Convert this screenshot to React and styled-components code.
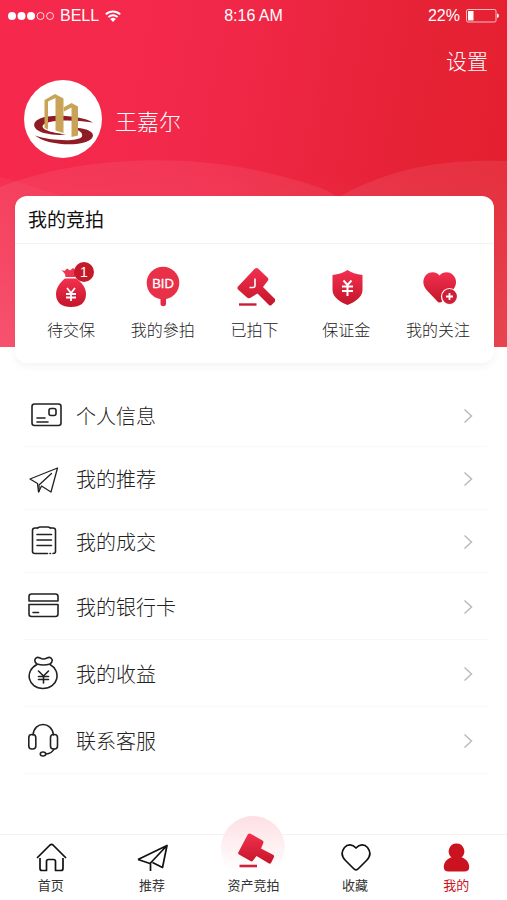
import styled, { createGlobalStyle } from 'styled-components';

const auctions = [
  { name: '待交保', icon: <BagIcon />, badge: 1 },
  { name: '我的參拍', icon: <BidIcon /> },
  { name: '已拍下', icon: <HammerIcon /> },
  { name: '保证金', icon: <ShieldIcon /> },
  { name: '我的关注', icon: <FollowIcon /> },
]

const menu = [
  { name: '个人信息', icon: <CardIcon /> },
  { name: '我的推荐', icon: <PlaneIcon /> },
  { name: '我的成交', icon: <ListIcon /> },
  { name: '我的银行卡', icon: <BankIcon />, tall: true },
  { name: '我的收益', icon: <IncomeIcon />, tall: true },
  { name: '联系客服', icon: <HeadsetIcon />, tall: true },
]

const tabs = [
  { name: '首页', icon: <HomeIcon /> },
  { name: '推荐', icon: <SendIcon /> },
  { name: '资产竞拍', icon: <AuctionIcon />, main: true },
  { name: '收藏', icon: <HeartIcon /> },
  { name: '我的', icon: <UserIcon />, active: true },
]

export default function App() {
  return (
    <Page>
      <GlobalStyle />
      <Gradients />
      <Header>
        <Waves viewBox="0 0 507 347" preserveAspectRatio="none">
          <path d="M0 177 Q30 185 62 196 V347 H0Z" fill="#fff" opacity=".04" />
          <path d="M0 187 C90 152 220 150 326 190 L350 204 V347 H0Z" fill="#fff" opacity=".07" />
          <path d="M326 204 L352 190 C400 166 450 159 507 161 V347 H326Z" fill="#fff" opacity=".08" />
        </Waves>
        <StatusBar>
          <StatusGroup>
            <SignalIcon />
            <span>BELL</span>
            <WifiIcon />
          </StatusGroup>
          <span>8:16 AM</span>
          <StatusGroup $end>
            <span>22%</span>
            <BatteryIcon />
          </StatusGroup>
        </StatusBar>
        <Settings type="button">设置</Settings>
        <Profile>
          <Avatar><LogoIcon /></Avatar>
          <h1>王嘉尔</h1>
        </Profile>
      </Header>

      <AuctionCard>
        <h2>我的竞拍</h2>
        <AuctionList>
          {auctions.map(a => (
            <AuctionButton type="button" key={a.name}>
              <IconBox>
                {a.icon}
                {a.badge && <Badge>{a.badge}</Badge>}
              </IconBox>
              {a.name}
            </AuctionButton>
          ))}
        </AuctionList>
      </AuctionCard>

      <Menu>
        {menu.map(m => (
          <MenuRow href="#" key={m.name} $tall={m.tall}>
            <MenuIcon>{m.icon}</MenuIcon>
            <span>{m.name}</span>
            <Arrow viewBox="0 0 10 16"><path d="M1.5 2.5 8.5 9l-7 6.5" /></Arrow>
          </MenuRow>
        ))}
      </Menu>

      <TabBar>
        {tabs.map(t => (
          <Tab href="#" key={t.name} $active={t.active}>
            <TabIcon $main={t.main}>{t.icon}</TabIcon>
            {t.name}
          </Tab>
        ))}
      </TabBar>
    </Page>
  );
}

function Gradients() {
  return (
    <svg width="0" height="0" style={{ position: 'absolute' }} aria-hidden="true">
      <linearGradient id="red" x1="0" y1="0" x2="0" y2="1">
        <stop offset="0" stopColor="#f2304f" />
        <stop offset="1" stopColor="#c4162a" />
      </linearGradient>
      <linearGradient id="soft" x1="0" y1="0" x2="0" y2="1">
        <stop offset="0" stopColor="#fddfe3" />
        <stop offset=".85" stopColor="#fff" />
      </linearGradient>
    </svg>
  )
}

function SignalIcon() {
  return (
    <svg width="46" height="10" viewBox="0 0 46 10" fill="#fff">
      <circle cx="4" cy="5" r="4" />
      <circle cx="13.5" cy="5" r="4" />
      <circle cx="23" cy="5" r="4" />
      <circle cx="32.5" cy="5" r="3.5" fill="none" stroke="#fff" strokeWidth=".8" />
      <circle cx="42" cy="5" r="3.5" fill="none" stroke="#fff" strokeWidth=".8" />
    </svg>
  )
}

function WifiIcon() {
  return (
    <svg width="16" height="12" viewBox="0 0 16 12" fill="none" stroke="#fff" strokeWidth="1.9">
      <path d="M.8 4.4a10.3 10.3 0 0 1 14.4 0" />
      <path d="M3.4 7.1a6.5 6.5 0 0 1 9.2 0" />
      <path d="M8 12 5.2 9.1a4 4 0 0 1 5.6 0z" fill="#fff" stroke="none" />
    </svg>
  )
}

function BatteryIcon() {
  return (
    <svg width="33" height="14" viewBox="0 0 33 14">
      <rect x=".5" y=".5" width="29.5" height="12.5" rx="1.5" fill="none" stroke="#fff" strokeOpacity=".7" />
      <rect x="2" y="2" width="5.5" height="9.5" fill="#fff" />
      <path d="M31 4.5q2 .5 2 2.3T31 9z" fill="#fff" />
    </svg>
  )
}

function LogoIcon() {
  return (
    <svg width="78" height="78" viewBox="0 0 78 78">
      <path d="M69 42.5C58 36 28 33.5 16 38.5C6 43 10 50.5 20 53C28 55 36 55.5 42 54.5C32 53 19 51 18.5 46.5C19 40 46 39 69 42.5Z" fill="#8f1b24" />
      <path d="M49 47.5C60 48 69 50.5 69 55.5C68.5 67 26 67.5 11 55.5C25 60.5 54 62.5 58 56.5C59.5 52.5 54 50 49 47.5Z" fill="#8f1b24" />
      <path d="M20.5 20 31 14 39.5 18.5V53L31.5 50.5V18L24 21.5V49.5L20.5 48Z" fill="#c9a356" />
      <path d="M39.5 27.5 47.5 23 54 26.5V55.5L47.5 57V27.5L40 31.5Z" fill="#c9a356" />
    </svg>
  )
}

function BagIcon() {
  return (
    <svg width="40" height="46" viewBox="0 0 40 46">
      <path d="M10.5 8 13.5 9 16 6.5 19 8.5 22 6 24.5 8 24 15H14.5L14 12Z" fill="#ee3450" />
      <path d="M14 16.5H25C31 20.5 35 26 35 32C35 41 29 45 20 45S5 41 5 32C5 26 9 20.5 14 16.5Z" fill="url(#red)" />
      <path d="m16 26 4 5 4-5M20 31v8M15 32h10M15 35.5h10" fill="none" stroke="#fff" strokeWidth="1.8" />
    </svg>
  )
}

function BidIcon() {
  return (
    <svg width="40" height="46" viewBox="0 0 40 46">
      <path d="M17.5 34h5.5v7.5a2.7 2.7 0 0 1-5.5 0z" fill="#e62a45" />
      <circle cx="20" cy="21" r="16.3" fill="#e93049" />
      <text x="20" y="26" textAnchor="middle" fill="#fff" stroke="#fff" strokeWidth=".3" fontSize="13" fontFamily="Liberation Sans, sans-serif">BID</text>
    </svg>
  )
}

function HammerIcon() {
  return (
    <svg width="42" height="46" viewBox="0 0 42 46">
      <path d="M24 6.5q1.500-1 3 0L36.5 15.5q1.500 1.500.5 3L32 25 44 37q1 1 0 2.500l-3.500 3.500q-1.500 1-2.500 0L26.500 31.500 19 36q-1.500.8-3-.5L7 27.500q-1.200-1.500 0-3Z" transform="translate(-2 0)" fill="url(#red)" />
      <path d="M22 16.5v7q0 2-2 2h-3.5" fill="none" stroke="#fff" strokeWidth="1.6" />
      <path d="M6 42.5h17.5" stroke="#c91d35" strokeWidth="2.4" />
    </svg>
  )
}

function ShieldIcon() {
  return (
    <svg width="40" height="46" viewBox="0 0 40 46">
      <path d="M21.5 8Q27 12 36.5 13V28C36.5 35 29 40 21.5 43C14 40 6.5 35 6.5 28V13Q16 12 21.5 8Z" fill="url(#red)" />
      <path d="m17.5 18.5 4 4.500 4-4.500M21.5 23v11M16 24.5h11M16 29h11" fill="none" stroke="#fff" strokeWidth="2" />
    </svg>
  )
}

function FollowIcon() {
  return (
    <svg width="40" height="46" viewBox="0 0 40 46">
      <path d="M21.5 13.5C25 9.5 31 9.5 34.5 12.5C39.5 17 39 23.5 34.5 28.5L24.5 39Q21.5 42 19 39L9 28.5C4.5 23.5 4 17 8.5 12.5C12.5 9.5 18 9.5 21.5 13.5Z" fill="url(#red)" />
      <circle cx="31.5" cy="34.5" r="8" fill="#cf1e35" stroke="#fff" strokeWidth="1.2" />
      <path d="M31.5 31v7M28 34.5h7" stroke="#fff" strokeWidth="1.8" />
    </svg>
  )
}

function CardIcon() {
  return (
    <svg width="34" height="34" viewBox="0 0 34 34">
      <rect x="4" y="6" width="29" height="21.5" rx="2.5" />
      <rect x="21" y="10.5" width="7" height="7" rx="2" />
      <path d="M9 20h8M9 24h11" />
    </svg>
  )
}

function PlaneIcon() {
  return (
    <svg width="34" height="34" viewBox="0 0 34 34">
      <path d="M2 18 29.5 7 23 31 13.5 25 10.5 31 9.5 22.5Z" strokeWidth="1.3" />
      <path d="M23.5 12.5 11 24V30.5" strokeWidth="1.3" />
    </svg>
  )
}

function ListIcon() {
  return (
    <svg width="34" height="34" viewBox="0 0 34 34">
      <path d="M9.5 4H7q-2.5 0-2.5 2.5v21q0 2 2.5 2H19.5M22 29.5h.5M25 29.5q2.5 0 2.5-2V6.5q0-2.500-2.500-2.500H22.5" />
      <path d="M9.5 4q1.500-1 3-1H19.5q1.500 0 3 1M9 10.5h14.5M9 16h14.5M9 21.5h14.5" />
    </svg>
  )
}

function BankIcon() {
  return (
    <svg width="34" height="34" viewBox="0 0 34 34">
      <path d="M1 12V7.5q0-2.500 2.500-2.500h24Q30 5 30 7.5v4.5Z" />
      <path d="M1 15.5H30V25q0 2.500-2.500 2.500h-24Q1 27.5 1 25ZM5 23.5h5.5" />
    </svg>
  )
}

function IncomeIcon() {
  return (
    <svg width="34" height="34" viewBox="0 0 34 34">
      <path d="M9 8C4.5 4.5 8 0 12 2q3.500 2 7 0c4-2 7.500 2.500 3 6q-6.500 2-13 0Z" />
      <path d="M9 8.5C-4 15 0 32.5 15 32.5S34 15 22 8.5" />
      <path d="m10.5 15 5 5 5-5M15.5 20v7M10.5 20.5h10M10.5 23.5h10" />
    </svg>
  )
}

function HeadsetIcon() {
  return (
    <svg width="34" height="34" viewBox="0 0 34 34">
      <path d="M5 12C6-2 24-2 25.5 12M26 26q-2 4.500-8 5" />
      <rect x=".8" y="11.5" width="7" height="14.5" rx="3" />
      <rect x="22.5" y="11.5" width="7" height="14.5" rx="3" />
      <ellipse cx="15" cy="31" rx="2.7" ry="2" />
    </svg>
  )
}

function HomeIcon() {
  return (
    <svg width="32" height="32" viewBox="0 0 32 32">
      <path d="M2 18 15 5q1.500-1.300 3 0L31 18" />
      <path d="M5 18V28.5q0 2 2 2h4.500v-9q0-2 2-2h5q2 0 2 2v9H26q2 0 2-2v-10.500" />
    </svg>
  )
}

function SendIcon() {
  return (
    <svg width="32" height="32" viewBox="0 0 32 32">
      <path d="M2 19.5 31 5.5 26.5 27.5 16.5 22.5M2 19.5 14 23.5M31 5.5 14.5 23V31" />
    </svg>
  )
}

function AuctionIcon() {
  return (
    <svg width="64" height="64" viewBox="0 0 64 64" overflow="visible">
      <circle cx="31" cy="32" r="32" fill="url(#soft)" />
      <path d="M26 18q1.500-1 3 0L40.5 24.5q1.500 1 .8 2.500L39 32.5 51.5 39q1 .8.5 2l-3 6q-.8 1-2 .5L34.5 40 31 44.5q-1 1.500-2.500.5L17 38.5q-1.500-1-.5-2.500Z" fill="url(#red)" />
      <path d="M17.5 50h17.5" stroke="#d31f38" strokeWidth="2.6" />
    </svg>
  )
}

function HeartIcon() {
  return (
    <svg width="32" height="32" viewBox="0 0 32 32">
      <path d="M17 8C20.5 4 25.5 4 28.5 7.5C32 12 31.5 16.5 27.5 20.5L19.5 28.5Q17 31 14.5 28.5L6.5 20.5C2.5 16.5 2 12 5.5 7.5C8.5 4 13.5 4 17 8Z" />
    </svg>
  )
}

function UserIcon() {
  return (
    <svg width="32" height="32" viewBox="0 0 32 32">
      <path d="M16.5 3.5a7.800 7.800 0 0 1 5 13.800C26.5 19 29.5 23 29.2 27.5Q29 31.5 24.5 31.5H8.5Q4 31.5 3.8 27.5C3.5 23 6.5 19 11.5 17.3A7.800 7.800 0 0 1 16.5 3.5Z" fill="#cb1220" stroke="none" />
    </svg>
  )
}

const GlobalStyle = createGlobalStyle`
*{box-sizing:border-box}
body{margin:0;background-color:#fff;
  font-family:'Liberation Sans','Noto Sans CJK SC',sans-serif;
}
h1,h2{margin:0;font-weight:400}
a{text-decoration:none}
button{border:0;background:none;padding:0;font-family:inherit}
svg{display:block;flex:none}
`

const Page = styled.div`
min-height:100vh;display:flex;flex-direction:column;
`

const Header = styled.header`
position:relative;height:347px;color:#fff;
display:flex;flex-direction:column;
background:linear-gradient(180deg,rgba(255,255,255,0) 50%,rgba(255,255,255,.1) 100%),
  linear-gradient(100deg,#f6294c 0%,#f2284a 38%,#e62236 75%,#e31f2d 100%);
`

const Waves = styled.svg`
position:absolute;left:0;top:0;width:100%;height:100%;
`

const StatusBar = styled.div`
position:relative;height:32px;padding:0 8px;
display:grid;grid-template-columns:1fr auto 1fr;align-items:center;
font-size:16px;
`

const StatusGroup = styled.div`
display:flex;align-items:center;gap:6px;
justify-content:${p => p.$end ? 'flex-end' : 'flex-start'};
`

const Settings = styled.button`
position:relative;align-self:flex-end;margin:15px 19px 0 0;
font-size:21px;line-height:30px;font-weight:300;color:#fff;
`

const Profile = styled.div`
position:relative;display:flex;align-items:center;gap:13px;
margin:3px 24px 0;
h1{font-size:22px;line-height:32px;font-weight:300;padding-top:8px}
`

const Avatar = styled.div`
width:78px;height:78px;border-radius:50%;background-color:#fff;overflow:hidden;
`

const AuctionCard = styled.section`
position:relative;margin:-151px 13px 0 15px;height:167px;
background-color:#fff;border-radius:12px;
box-shadow:0 3px 8px rgba(0,0,0,.05);
h2{height:48px;padding-left:13px;border-bottom:1px solid #f2f2f2;
  font-size:19px;line-height:50px;color:#111;}
`

const AuctionList = styled.div`
display:flex;padding:18px 10px 0;
`

const AuctionButton = styled.button`
flex:1;display:flex;flex-direction:column;align-items:center;gap:11px;
font-size:16px;line-height:24px;font-weight:300;color:#222;
`

const IconBox = styled.span`
position:relative;
`

const Badge = styled.span`
position:absolute;left:23px;top:0;width:20px;height:20px;border-radius:50%;
background-color:#c51828;color:#fff;font-size:14px;line-height:20px;text-align:center;
`

const Menu = styled.nav`
padding:21px 20px 0 24px;
`

const MenuRow = styled.a`
display:flex;align-items:center;gap:14px;
height:${p => p.$tall ? 67 : 63}px;border-bottom:1px solid #f8f8f8;
font-size:20px;font-weight:300;color:#222;
span{flex:1}
`

const MenuIcon = styled.div`
padding-left:4px;
svg{fill:none;stroke:#222;stroke-width:1.6;stroke-linecap:round;stroke-linejoin:round}
`

const Arrow = styled.svg`
width:10px;height:16px;margin-right:14px;
fill:none;stroke:#bbb;stroke-width:1.5;
`

const TabBar = styled.nav`
display:flex;height:66px;margin-top:auto;border-top:1px solid #f2f2f2;
`

const Tab = styled.a`
flex:1;display:flex;flex-direction:column;align-items:center;justify-content:flex-end;
padding-bottom:4px;font-size:13px;line-height:20px;
color:${p => p.$active ? '#cb1220' : '#333'};
`

const TabIcon = styled.div`
height:${p => p.$main ? 60 : 36}px;
svg{fill:none;stroke:${p => p.$main ? 'none' : '#111'};stroke-width:1.7;stroke-linejoin:round}
`
